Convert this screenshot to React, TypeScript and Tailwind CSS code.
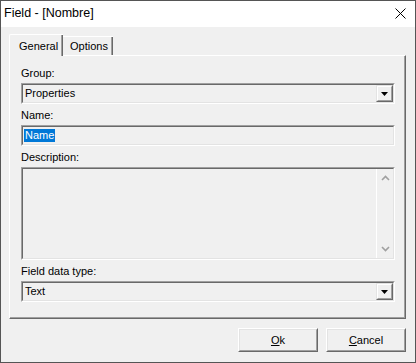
import React from "react";

function Sunken({ className = "", children }: { className?: string; children?: React.ReactNode }) {
  return (
    <div className={"border border-t-[#a0a0a0] border-l-[#a0a0a0] border-b-white border-r-white " + className}>
      <div className="h-full border border-t-[#696969] border-l-[#696969] border-b-[#e3e3e3] border-r-[#e3e3e3] bg-[#f0f0f0] flex">
        {children}
      </div>
    </div>
  );
}

function DropButton() {
  return (
    <div className="w-[17px] h-full border border-t-[#e3e3e3] border-l-[#e3e3e3] border-b-[#696969] border-r-[#696969]">
      <div className="w-full h-full border border-t-white border-l-white border-b-[#a0a0a0] border-r-[#a0a0a0] flex items-center justify-center bg-[#f0f0f0]">
        <svg width="7" height="4" viewBox="0 0 7 4">
          <path d="M0 0H7L3.5 4Z" fill="#000" />
        </svg>
      </div>
    </div>
  );
}

function Combo({ value }: { value: string }) {
  return (
    <Sunken className="h-[21px]">
      <div className="flex-1 flex items-center pl-[2px] leading-[13px]">{value}</div>
      <DropButton />
    </Sunken>
  );
}

function Button({ children }: { children: React.ReactNode }) {
  return (
    <div className="w-[80px] h-[24px] border border-t-white border-l-white border-b-[#696969] border-r-[#696969]">
      <div className="w-full h-full border border-t-[#e3e3e3] border-l-[#e3e3e3] border-b-[#a0a0a0] border-r-[#a0a0a0] bg-[#f0f0f0] flex items-center justify-center leading-[13px]">
        {children}
      </div>
    </div>
  );
}

export default function App() {
  return (
    <div className="w-[416px] h-[363px] flex flex-col border border-[#555555] bg-[#f0f0f0] text-black text-[11px] font-['Liberation_Sans',Arial,sans-serif]">
      {/* Title bar */}
      <div className="h-[26px] bg-white flex items-center justify-between pl-[3px] pr-[9px] pb-[2px]">
        <span className="text-[12.5px] leading-[15px]">Field - [Nombre]</span>
        <svg width="11" height="11" viewBox="0 0 11 11">
          <path d="M0.5 0.5L10.5 10.5M10.5 0.5L0.5 10.5" stroke="#000" strokeWidth="1" />
        </svg>
      </div>

      <div className="flex-1 flex flex-col pl-[8px] pr-[9px] pt-[7px]">
        {/* Tabs */}
        <div className="flex items-end h-[21px] relative z-10">
          <div className="w-[54px] h-[22px] -mb-[1px] bg-[#f0f0f0] border-l border-t border-l-white border-t-white rounded-tl-[2px] flex">
            <div className="flex-1 pl-[9px] pt-[5px] leading-[13px] border-r border-r-[#a0a0a0]">General</div>
            <div className="w-[1px] bg-[#696969]" />
          </div>
          <div className="w-[50px] h-[19px] bg-[#f0f0f0] border-t border-t-white flex">
            <div className="flex-1 pl-[7px] pt-[3px] leading-[13px] border-r border-r-[#a0a0a0]">Options</div>
            <div className="w-[1px] bg-[#696969]" />
          </div>
        </div>

        {/* Panel */}
        <div className="h-[264px] border border-t-white border-l-white border-b-[#696969] border-r-[#696969]">
          <div className="h-full border-r border-b border-r-[#a0a0a0] border-b-[#a0a0a0] flex flex-col pl-[11px] pr-[9px] pt-[11px]">
            <div className="leading-[13px] mb-[3px]">Group:</div>
            <Combo value="Properties" />
            <div className="leading-[13px] mt-[5px] mb-[3px]">Name:</div>
            <Sunken className="h-[21px]">
              <div className="flex items-center pl-[1px]">
                <span className="bg-[#0078d7] text-white leading-[13px] px-[1px]">Name</span>
              </div>
            </Sunken>
            <div className="leading-[13px] mt-[5px] mb-[3px]">Description:</div>
            <Sunken className="h-[93px]">
              <div className="flex-1" />
              <div className="w-[17px] border-l border-l-[#ffffff] flex flex-col justify-between items-center py-[6px] bg-[#f0f0f0]">
                <svg width="9" height="6" viewBox="0 0 9 6">
                  <path d="M1 5L4.5 1.5L8 5" stroke="#a0a0a0" strokeWidth="1.6" fill="none" />
                </svg>
                <svg width="9" height="6" viewBox="0 0 9 6">
                  <path d="M1 1L4.5 4.5L8 1" stroke="#a0a0a0" strokeWidth="1.6" fill="none" />
                </svg>
              </div>
            </Sunken>
            <div className="leading-[13px] mt-[5px] mb-[3px]">Field data type:</div>
            <Combo value="Text" />
          </div>
        </div>

        {/* Buttons */}
        <div className="flex justify-end gap-[8px] mt-[9px]">
          <Button>
            <span><u>O</u>k</span>
          </Button>
          <Button>
            <span><u>C</u>ancel</span>
          </Button>
        </div>
      </div>
    </div>
  );
}
